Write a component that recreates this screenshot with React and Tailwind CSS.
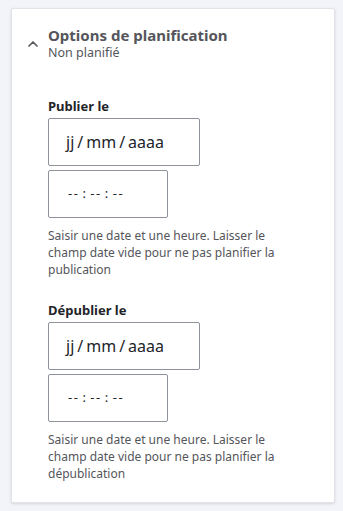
import { ChevronUp } from 'lucide-react';

const font = { fontFamily: '"Noto Sans", "Open Sans", sans-serif' };

const ScheduleField = ({ label, help }) => (
  <div className="flex flex-col">
    <div className="text-[13px] font-bold leading-[18px] text-[#232429] mb-[3px]">{label}</div>
    <div className="w-[152px] h-[48px] border border-[#8e929c] rounded-[2px] bg-white flex items-center pl-[17px] text-[16px] text-[#232429]">
      <span>jj</span><span className="mx-[3px]">/</span><span>mm</span><span className="mx-[3px]">/</span><span>aaaa</span>
    </div>
    <div className="mt-[4px] w-[120px] h-[48px] border border-[#8e929c] rounded-[2px] bg-white flex items-center pl-[19px] text-[13px] text-[#232429] tracking-[1.5px]">
      <span>--</span><span className="mx-[3px]">:</span><span>--</span><span className="mx-[3px]">:</span><span>--</span>
    </div>
    <p className="mt-[9px] text-[12px] leading-[17px] text-[#55565b] pr-2">{help}</p>
  </div>
);

export default function App() {
  return (
    <div className="min-h-[511px] bg-[#f3f4f9] pl-[11px] pr-[8px] pt-[8px] pb-[8px]" style={font}>
      <div className="bg-white border border-[#e2e3e8] rounded-[2px] shadow-[0_1px_3px_rgba(0,0,0,0.12)] h-[495px]">
        <div className="flex items-start pl-[13px] pt-[16px]">
          <ChevronUp className="w-[16px] h-[16px] text-[#55565b] mt-[11px] mr-[7px]" strokeWidth={2.5} />
          <div className="flex flex-col">
            <span className="text-[15px] font-bold leading-[20px] text-[#55565b]">Options de planification</span>
            <span className="text-[12.5px] leading-[16px] text-[#55565b]">Non planifié</span>
          </div>
        </div>
        <div className="pl-[36px] pr-[30px] pt-[36px] flex flex-col gap-[23px]">
          <ScheduleField
            label="Publier le"
            help="Saisir une date et une heure. Laisser le champ date vide pour ne pas planifier la publication"
          />
          <ScheduleField
            label="Dépublier le"
            help="Saisir une date et une heure. Laisser le champ date vide pour ne pas planifier la dépublication"
          />
        </div>
      </div>
    </div>
  );
}
